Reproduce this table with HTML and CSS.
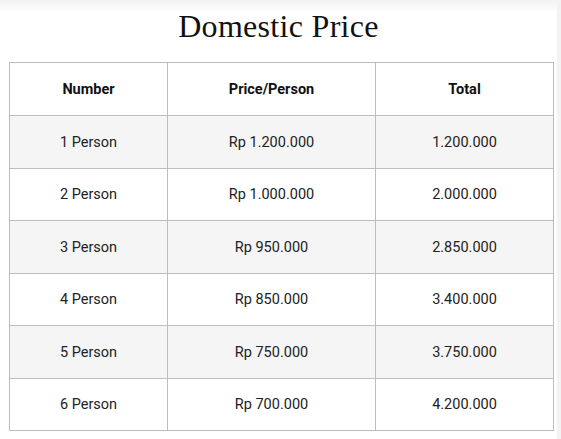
FILE: index.html
```html
<!DOCTYPE html>
<html>
<head>
<meta charset="utf-8">
<link rel="stylesheet" href="styles.css">
</head>
<body>
<div class="page">
  <h1 class="title">Domestic Price</h1>
  <table class="price-table">
    <thead>
      <tr><th class="c1">Number</th><th class="c2">Price/Person</th><th class="c3">Total</th></tr>
    </thead>
    <tbody>
      <tr class="odd r1"><td>1 Person</td><td>Rp 1.200.000</td><td>1.200.000</td></tr>
      <tr class="r2"><td>2 Person</td><td>Rp 1.000.000</td><td>2.000.000</td></tr>
      <tr class="odd r1"><td>3 Person</td><td>Rp 950.000</td><td>2.850.000</td></tr>
      <tr class="r2"><td>4 Person</td><td>Rp 850.000</td><td>3.400.000</td></tr>
      <tr class="odd r1"><td>5 Person</td><td>Rp 750.000</td><td>3.750.000</td></tr>
      <tr class="r2"><td>6 Person</td><td>Rp 700.000</td><td>4.200.000</td></tr>
    </tbody>
  </table>
</div>
</body>
</html>
```
FILE: styles.css
```css
html, body {
  margin: 0;
  padding: 0;
  background: #ffffff;
}
body {
  width: 561px;
  height: 439px;
  overflow: hidden;
  background: linear-gradient(to bottom, #f2f2f2 0px, #ffffff 12px);
}
.page {
  width: 557px;
  height: 439px;
  border-right: 4px solid #f3f3f3;
  box-sizing: content-box;
}
.title {
  margin: 0;
  padding-top: 8px;
  height: 62px;
  box-sizing: border-box;
  text-align: center;
  font-family: "Liberation Serif", serif;
  font-weight: normal;
  font-size: 32px;
  line-height: 36px;
  color: #111;
  letter-spacing: 0.3px;
}
.price-table {
  margin-left: 9px;
  width: 545px;
  border-collapse: collapse;
  table-layout: fixed;
  font-family: Roboto, "Liberation Sans", sans-serif;
  font-size: 14.5px;
  color: #222;
}
.price-table th, .price-table td {
  border: 1px solid #bdbdbd;
  text-align: center;
  padding: 0;
}
.price-table th {
  font-weight: bold;
  color: #111;
}
.c1 { width: 157px; }
.c2 { width: 207px; }
thead tr { height: 53px; }
.r1 { height: 53px; }
.r2 { height: 52px; }
.odd { background: #f5f5f5; }
```
